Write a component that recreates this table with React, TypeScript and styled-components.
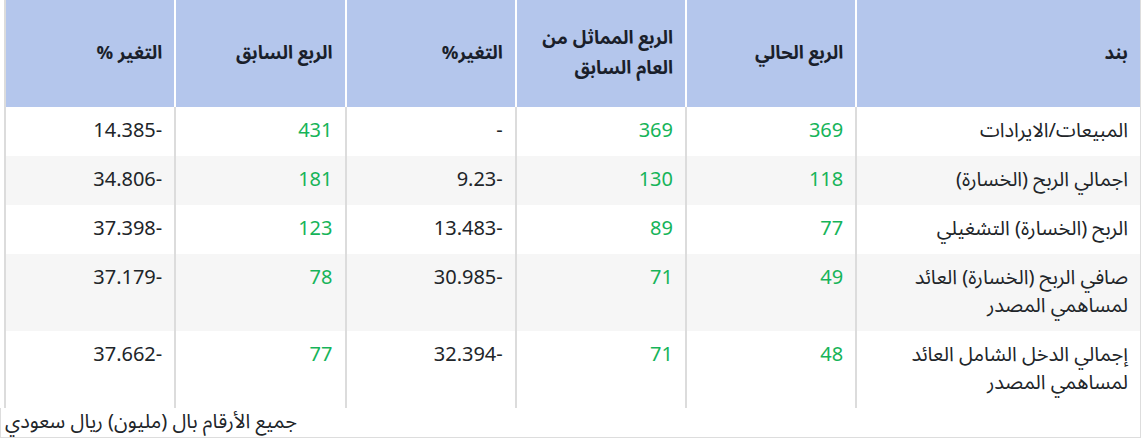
import styled, {createGlobalStyle} from 'styled-components'

const GlobalStyle = createGlobalStyle`
  html, body { margin: 0; padding: 0; background: #fff; }
  body {
    font-family: "Noto Sans Arabic", "Noto Sans", "DejaVu Sans", sans-serif;
    color: #212529;
  }
`

const Wrapper = styled.div`
  box-sizing: border-box;
  width: 1141px;
  border-right: 1px solid #dddddd;
  border-bottom: 1px solid #dddddd;
  direction: rtl;
`

const Table = styled.table`
  width: 1136px;
  margin-left: 4px;
  border-collapse: collapse;
  table-layout: fixed;
  font-size: 20px;
`

const HeadCell = styled.th<{ $wide?: boolean }>`
  width: ${p => (p.$wide ? '25%' : '15%')};
  height: 107px;
  box-sizing: border-box;
  padding: 0 12px;
  background: #b4c6ec;
  text-align: right;
  vertical-align: middle;
  font-size: 18.5px;
  font-weight: 700;
  line-height: 30px;
  color: #1a1f2b;
  border-left: 2px solid #ffffff;
  &:last-child { border-left-color: #dcdcdc; }
`

const Row = styled.tr<{ $alt?: boolean }>`
  background: ${p => (p.$alt ? '#f6f6f6' : '#ffffff')};
`

const Cell = styled.td<{ $green?: boolean }>`
  padding: 10px 12px 11px;
  line-height: 28px;
  text-align: right;
  vertical-align: top;
  color: ${p => (p.$green ? '#16b459' : '#212529')};
  border-left: 2px solid #dcdcdc;
`

const Num = styled.span`
  direction: ltr;
  unicode-bidi: plaintext;
`

const Footer = styled.div`
  border-left: 1px solid #dddddd;
  padding: 0 4px 1px;
  line-height: 28px;
  font-size: 20px;
  text-align: left;
  color: #212529;
`

type RowData = {
  label: string
  current: string
  sameLastYear: string
  changeYear: string
  previous: string
  changeQuarter: string
}

const rows: RowData[] = [
  { label: 'المبيعات/الايرادات', current: '369', sameLastYear: '369', changeYear: '-', previous: '431', changeQuarter: '14.385-' },
  { label: 'اجمالي الربح (الخسارة)', current: '118', sameLastYear: '130', changeYear: '9.23-', previous: '181', changeQuarter: '34.806-' },
  { label: 'الربح (الخسارة) التشغيلي', current: '77', sameLastYear: '89', changeYear: '13.483-', previous: '123', changeQuarter: '37.398-' },
  { label: 'صافي الربح (الخسارة) العائد لمساهمي المصدر', current: '49', sameLastYear: '71', changeYear: '30.985-', previous: '78', changeQuarter: '37.179-' },
  { label: 'إجمالي الدخل الشامل العائد لمساهمي المصدر', current: '48', sameLastYear: '71', changeYear: '32.394-', previous: '77', changeQuarter: '37.662-' },
]

export default function App() {
  return <>
    <GlobalStyle />
    <Wrapper>
      <Table>
        <thead>
          <tr>
            <HeadCell $wide>بند</HeadCell>
            <HeadCell>الربع الحالي</HeadCell>
            <HeadCell>الربع المماثل من العام السابق</HeadCell>
            <HeadCell>التغير%</HeadCell>
            <HeadCell>الربع السابق</HeadCell>
            <HeadCell>التغير %</HeadCell>
          </tr>
        </thead>
        <tbody>
          {rows.map((r, i) => (
            <Row key={r.label} $alt={i % 2 === 1}>
              <Cell>{r.label}</Cell>
              <Cell $green>{r.current}</Cell>
              <Cell $green>{r.sameLastYear}</Cell>
              <Cell><Num>{r.changeYear}</Num></Cell>
              <Cell $green>{r.previous}</Cell>
              <Cell><Num>{r.changeQuarter}</Num></Cell>
            </Row>
          ))}
        </tbody>
      </Table>
      <Footer>جميع الأرقام بال (مليون) ريال سعودي</Footer>
    </Wrapper>
  </>
}
